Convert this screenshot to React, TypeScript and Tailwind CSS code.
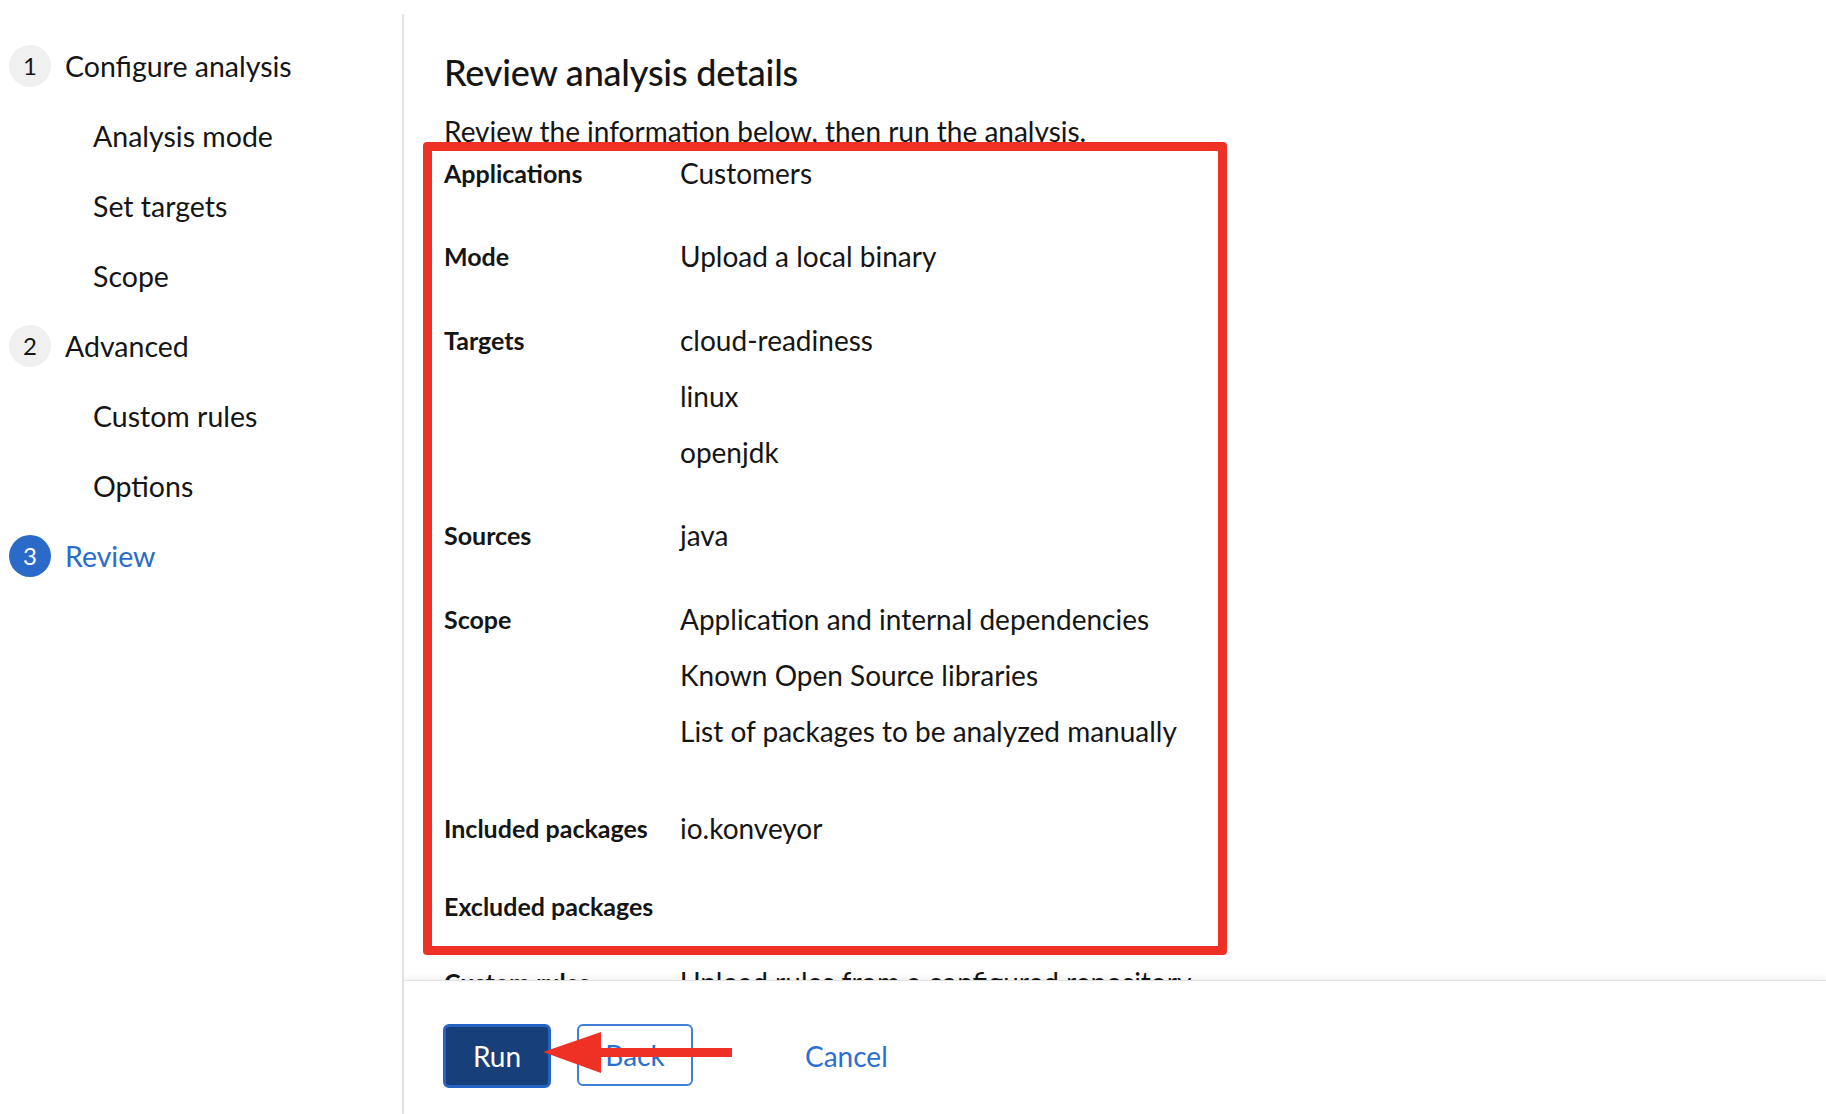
import React from "react";

const steps = [
  { id: "configure", num: "1", label: "Configure analysis" },
  { id: "mode", label: "Analysis mode" },
  { id: "targets", label: "Set targets" },
  { id: "scope", label: "Scope" },
  { id: "advanced", num: "2", label: "Advanced" },
  { id: "rules", label: "Custom rules" },
  { id: "options", label: "Options" },
  { id: "review", num: "3", label: "Review", active: true },
];

const details = [
  { label: "Applications", values: ["Customers"], mt: "mt-0" },
  { label: "Mode", values: ["Upload a local binary"], mt: "mt-[43px]" },
  { label: "Targets", values: ["cloud-readiness", "linux", "openjdk"], mt: "mt-[44px]" },
  { label: "Sources", values: ["java"], mt: "mt-[43px]" },
  {
    label: "Scope",
    values: [
      "Application and internal dependencies",
      "Known Open Source libraries",
      "List of packages to be analyzed manually",
    ],
    mt: "mt-[44px]",
  },
  { label: "Included packages", values: ["io.konveyor"], mt: "mt-[57px]" },
  { label: "Excluded packages", values: [], mt: "mt-[38px]" },
  { label: "Custom rules", values: ["Upload rules from a configured repository"], mt: "mt-[36px]" },
];

export default function App() {
  return (
    <div
      className="relative flex h-[1114px] w-[1826px] overflow-hidden bg-white text-[#151515]"
      style={{ fontFamily: "Lato, 'Open Sans', sans-serif" }}
    >
      {/* wizard nav */}
      <aside className="w-[402px] shrink-0 pt-[31px]">
        {steps.map((step) =>
          step.num ? (
            <div key={step.id} className="flex h-[70px] items-center gap-[14px] pl-[9px]">
              <span
                className={`flex h-[42px] w-[42px] items-center justify-center rounded-full text-[24px] ${
                  step.active ? "bg-[#2a6bc9] text-white" : "bg-[#f0f0f0] text-[#151515]"
                }`}
              >
                {step.num}
              </span>
              <span className={`text-[28.5px] ${step.active ? "text-[#2a6bc9]" : ""}`}>{step.label}</span>
            </div>
          ) : (
            <div key={step.id} className="flex h-[70px] items-center pl-[93px] text-[28.5px]">
              {step.label}
            </div>
          )
        )}
      </aside>

      <div className="mt-[14px] w-[2px] shrink-0 bg-[#e4e4e4]" />

      <main className="flex min-w-0 flex-1 flex-col">
        <div className="flex-1 overflow-hidden pl-[40px] pt-[49px]">
          <h1 className="text-[36px] font-medium leading-[46px] tracking-[-0.2px]">Review analysis details</h1>
          <p className="mt-[16px] text-[28px] leading-[40px]">Review the information below, then run the analysis.</p>

          <div className="mt-[2px]">
            {details.map((row) => (
              <div key={row.label} className={`flex ${row.mt}`}>
                <div className="w-[236px] shrink-0 text-[25px] font-bold leading-[40px]">{row.label}</div>
                <div className="flex flex-col gap-[16px] text-[28px] leading-[40px]">
                  {row.values.map((v) => (
                    <span key={v}>{v}</span>
                  ))}
                </div>
              </div>
            ))}
          </div>
        </div>

        <footer className="z-10 flex h-[134px] shrink-0 items-start border-t border-[#e2e2e2] bg-white pl-[39px] pt-[43px] shadow-[0_-3px_5px_rgba(0,0,0,0.05)]">
          <button className="h-[64px] w-[108px] rounded-[6px] border-[3px] border-[#2563c5] bg-[#173f7a] text-[28px] text-white">
            Run
          </button>
          <button className="ml-[26px] h-[62px] w-[116px] rounded-[6px] border-2 border-[#3f7fd8] bg-white text-[28px] text-[#2b6fd0]">
            Back
          </button>
          <button className="ml-[112px] h-[64px] text-[28px] text-[#2b6fd0]">Cancel</button>
        </footer>
      </main>

      {/* annotation: highlight box */}
      <div className="pointer-events-none absolute left-[423px] top-[142px] h-[813px] w-[804px] rounded-[4px] border-[9px] border-[#ee3124]" />

      {/* annotation: arrow pointing at Run */}
      <svg
        className="pointer-events-none absolute left-[540px] top-[1028px] z-20"
        width="196"
        height="50"
        viewBox="0 0 196 50"
      >
        <polygon points="3,24 61,4 61,20 192,20 192,29 61,29 61,45" fill="#ee3124" />
      </svg>
    </div>
  );
}
